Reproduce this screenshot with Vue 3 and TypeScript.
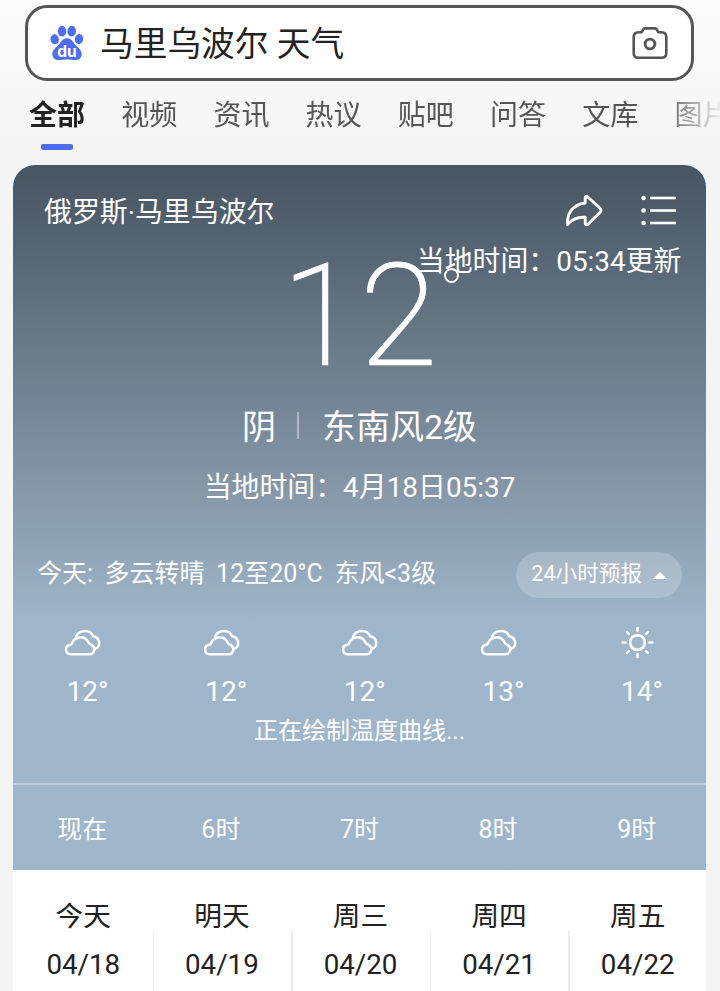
<script setup lang="ts">
interface Hour {
  temp: number
  label: string
  sky: 'cloud' | 'sun'
}
interface Day {
  name: string
  date: string
}

const tabs: string[] = ['全部', '视频', '资讯', '热议', '贴吧', '问答', '文库', '图片']

const hours: Hour[] = [
  { temp: 12, label: '现在', sky: 'cloud' },
  { temp: 12, label: '6时', sky: 'cloud' },
  { temp: 12, label: '7时', sky: 'cloud' },
  { temp: 13, label: '8时', sky: 'cloud' },
  { temp: 14, label: '9时', sky: 'sun' },
]

const days: Day[] = [
  { name: '今天', date: '04/18' },
  { name: '明天', date: '04/19' },
  { name: '周三', date: '04/20' },
  { name: '周四', date: '04/21' },
  { name: '周五', date: '04/22' },
]
</script>

<template>
  <div class="page">
    <header class="search">
      <svg class="paw" viewBox="0 0 34 36" aria-hidden="true">
        <g fill="#4e6ef2">
          <ellipse cx="4.700" cy="14.300" rx="4.200" ry="5" transform="rotate(-8 4.700 14.300)" />
          <ellipse cx="12" cy="6.200" rx="4.200" ry="5.400" />
          <ellipse cx="21.700" cy="6.200" rx="4.200" ry="5.400" transform="rotate(6 21.700 6.200)" />
          <ellipse cx="29" cy="14.100" rx="4.200" ry="5" transform="rotate(8 29 14.100)" />
          <path d="M17 13.200c-4.400 0-5.800 3.500-8 6.200C6.600 22.200 2.300 24.400 2.300 29c0 3.900 2.800 6.100 6.300 6.100 2.800 0 5.300-.6 8.400-.6s5.600.6 8.400.6c3.500 0 6.300-2.200 6.300-6.100 0-4.600-4.300-6.800-6.700-9.600-2.200-2.700-3.600-6.200-8-6.200z" />
        </g>
        <text class="paw-text" x="17" y="31.800" text-anchor="middle">du</text>
      </svg>
      <span class="query">马里乌波尔 天气</span>
      <svg class="camera" viewBox="0 0 36 34" fill="none" stroke="#555" stroke-width="2.600" stroke-linejoin="round" aria-hidden="true">
        <path d="M6.500 6.200h3.200l1.600-2.900q.5-.9 1.600-.9h10.200q1.100 0 1.600.9l1.600 2.900h3.200q4.800 0 4.800 4.800v16q0 4.800-4.800 4.800h-23q-4.800 0-4.800-4.800V11q0-4.800 4.800-4.800z" />
        <circle cx="18" cy="18" r="4.900" stroke-width="2.900" />
      </svg>
    </header>

    <nav class="tabs">
      <span v-for="(tab, i) in tabs" :key="tab" class="tab" :class="{ active: i === 0 }">{{ tab }}</span>
    </nav>

    <main class="card">
      <section class="weather">
        <div class="top">
          <span class="city">俄罗斯·马里乌波尔</span>
          <svg class="share" viewBox="0 0 38 34" fill="none" stroke="#fff" stroke-width="2.900" stroke-linejoin="round" aria-hidden="true">
            <path d="M20.200 9V4.100q0-3 2.500-1.100L34.800 14q2.400 2.300 0 4.600L23.500 29.800q-3.300 2.300-3.300-1v-5.500C12.500 22.800 6 26.300 2.600 30.600 1.500 19.500 8 10.500 20.200 9z" />
          </svg>
          <svg class="list" viewBox="0 0 36 32" fill="#fff" aria-hidden="true">
            <circle cx="2.600" cy="3" r="2.300" /><rect x="9" y="1.700" width="26" height="2.600" />
            <circle cx="2.600" cy="15.500" r="2.300" /><rect x="9" y="14.200" width="26" height="2.600" />
            <circle cx="2.600" cy="28" r="2.300" /><rect x="9" y="26.700" width="26" height="2.600" />
          </svg>
        </div>
        <div class="updated">当地时间：05:34更新</div>
        <div class="temperature">12<i class="ring"></i></div>
        <div class="condition">
          <span>阴</span><i class="bar"></i><span>东南风2级</span>
        </div>
        <div class="local">当地时间：4月18日05:37</div>
        <div class="today">
          <span>今天:</span><span>多云转晴</span><span>12至20°C</span><span>东风&lt;3级</span>
          <button class="pill">24小时预报<i class="arrow"></i></button>
        </div>
        <div class="row skies">
          <div v-for="h in hours" :key="h.label" class="col">
            <svg v-if="h.sky === 'cloud'" class="sky" viewBox="0 0 40 34" fill="none" stroke="#fff" stroke-width="2.500" stroke-linejoin="round" stroke-linecap="round" aria-hidden="true">
              <path d="M8.300 28.300h18.900a5 5 0 0 0 2.200-9.500q-2.300-.8-3.400-3.100c-3.400-6.300-13.500-5.700-16 1.500q-.4 1.300-1.900 1.500a4.850 4.850 0 0 0 .2 9.600z" />
              <path d="M14 10.500C17.500 3.300 28.500 3.200 31 10.200c7.500 1.200 8.200 10.800 2 12.500" />
            </svg>
            <svg v-else class="sky" viewBox="0 0 40 34" fill="none" stroke="#fff" stroke-width="2.600" stroke-linecap="round" aria-hidden="true">
              <circle cx="20.500" cy="16.500" r="7.400" />
              <path d="M20.500 2v2.600M20.500 28.400V31M5.700 16.500h2.900M32.400 16.500h2.900M10.100 6.100l1.800 1.800M29.100 25.100l1.800 1.800M10.100 26.900l1.800-1.800M29.100 7.900l1.800-1.800" />
            </svg>
            <span class="deg">{{ h.temp }}<i class="sign">°</i></span>
          </div>
        </div>
        <div class="drawing">正在绘制温度曲线...</div>
        <div class="row times">
          <span v-for="h in hours" :key="h.label" class="col">{{ h.label }}</span>
        </div>
      </section>

      <section class="row days">
        <div v-for="d in days" :key="d.date" class="col day">
          <span class="name">{{ d.name }}</span>
          <span class="date">{{ d.date }}</span>
        </div>
      </section>
    </main>
  </div>
</template>

<style>
body {
  background: #f4f4f4;
  overflow: hidden;
}
</style>

<style scoped>
.page {
  box-sizing: border-box;
  width: 720px;
  height: 991px;
  overflow: hidden;
  padding-top: 5px;
  background: linear-gradient(#fcfcfc, #f4f4f4 165px);
  font-family: Roboto, 'Noto Sans CJK SC', sans-serif;
}
i {
  font-style: normal;
}
.search {
  box-sizing: border-box;
  display: flex;
  align-items: center;
  width: 669px;
  height: 76px;
  margin-left: 25px;
  padding: 0 23px 0 22px;
  border: 3px solid #555;
  border-radius: 22px;
  background: #fff;
}
.paw {
  width: 34px;
  height: 36px;
}
.paw-text {
  font: 700 15.500px Inter, sans-serif;
  fill: #fff;
}
.query {
  flex: 1;
  margin-left: 16px;
  padding-top: 3px;
  font-size: 33.700px;
  line-height: 40px;
  color: #222;
}
.camera {
  width: 36px;
  height: 34px;
}
.tabs {
  display: flex;
  gap: 36.200px;
  height: 84px;
  padding-left: 29px;
  overflow: hidden;
  box-sizing: border-box;
  mask-image: linear-gradient(90deg, #000 660px, transparent 724px);
}
.tab {
  display: flex;
  flex-direction: column;
  flex: none;
  align-items: center;
  padding-top: 15px;
  font-size: 28px;
  line-height: 40px;
  color: #555;
}
.active {
  font-weight: 700;
  color: #222;
}
.active::after {
  content: '';
  width: 32px;
  height: 6px;
  margin-top: 8px;
  border-radius: 2px;
  background: #4e6ef2;
}
.card {
  width: 693px;
  height: 826px;
  margin-left: 13px;
  border-radius: 22px 22px 0 0;
  overflow: hidden;
  background: #fff;
}
.weather {
  display: flex;
  flex-direction: column;
  height: 705px;
  color: #fff;
  background: linear-gradient(#485562 0, #566574 85px, #667784 165px, #748595 240px, #8799a9 330px, #91a5b6 385px, #9fb5ca 455px, #a0b6cb 100%);
}
.top {
  display: flex;
  align-items: center;
  height: 40px;
  padding: 26px 29px 0 31px;
}
.city {
  flex: 1;
  margin-top: -2px;
  font-size: 27.900px;
}
.share {
  width: 38px;
  height: 34px;
  margin-right: 38px;
}
.list {
  width: 36px;
  height: 32px;
}
.updated {
  height: 30px;
  margin: 16px 24.500px 0;
  text-align: right;
  font-size: 27.900px;
  line-height: 30px;
}
.temperature {
  position: relative;
  align-self: center;
  height: 120px;
  margin-top: -20px;
  font-size: 142px;
  font-weight: 200;
  line-height: 120px;
  -webkit-text-stroke: 0.600px #fff;
}
.ring {
  position: absolute;
  top: 11px;
  right: -21px;
  width: 11px;
  height: 11px;
  border: 2px solid #fff;
  border-radius: 50%;
}
.condition {
  display: flex;
  align-items: center;
  justify-content: center;
  height: 50px;
  margin-top: 22px;
  font-size: 34px;
}
.bar {
  width: 2px;
  height: 27px;
  margin: 3px 23px 0 21px;
  background: rgba(235, 225, 240, 0.5);
}
.local {
  height: 40px;
  margin-top: 19px;
  text-align: center;
  font-size: 27.900px;
  line-height: 40px;
}
.today {
  display: flex;
  align-items: center;
  gap: 11.500px;
  height: 46px;
  margin-top: 44px;
  padding: 0 24px 0 24px;
  font-size: 25px;
  line-height: 40px;
}
.today > span {
  margin-top: -2px;
}
.pill {
  display: flex;
  align-items: center;
  gap: 11px;
  height: 46px;
  margin-left: auto;
  padding: 0 15px 2px;
  border: 0;
  border-radius: 23px;
  background: rgba(255, 255, 255, 0.2);
  color: #fff;
  font: inherit;
  font-size: 21.600px;
}
.arrow {
  margin-top: 3px;
  border: 7px solid transparent;
  border-top: 0;
  border-bottom: 7.500px solid #fff;
}
.row {
  display: grid;
  grid-template-columns: repeat(5, 1fr);
}
.col {
  display: flex;
  flex-direction: column;
  align-items: center;
}
.skies {
  height: 87px;
  padding-top: 28px;
}
.sky {
  width: 40px;
  height: 34px;
}
.deg {
  margin-top: 15px;
  font-size: 28px;
  line-height: 34px;
}
.sign {
  margin-right: -0.380em;
}
.drawing {
  height: 70px;
  text-align: center;
  font-size: 24px;
  line-height: 37px;
}
.times {
  flex: 1;
  border-top: 2px solid rgba(255, 255, 255, 0.3);
  align-items: center;
  padding-bottom: 1px;
  font-size: 25px;
}
.days {
  height: 121px;
  color: #222;
}
.day {
  position: relative;
  padding: 27px 0 0 2px;
  font-size: 27.700px;
  line-height: 40px;
}
.date {
  margin-top: 8px;
}
.day + .day::before {
  content: '';
  position: absolute;
  left: 1px;
  top: 61px;
  bottom: 0;
  width: 1.500px;
  background: #ececec;
}
</style>
